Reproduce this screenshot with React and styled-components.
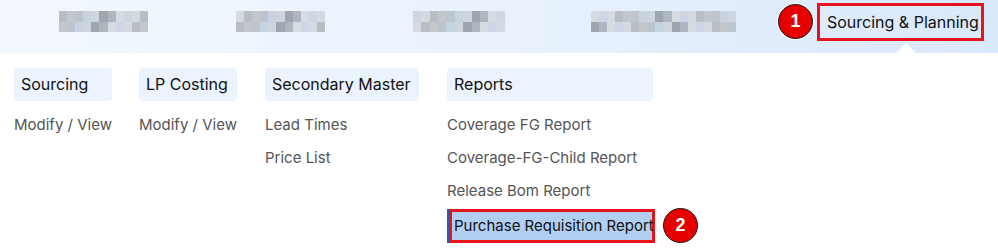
import React from "react";
import styled, { createGlobalStyle } from "styled-components";

const Global = createGlobalStyle`
  html, body { margin: 0; padding: 0; background: #fff; }
  body { font-family: Inter, "Noto Sans", sans-serif; width: 998px; height: 249px; overflow: hidden; }
`;

const TopBar = styled.div`
  height: 53px;
  display: flex;
  align-items: center;
  background: linear-gradient(90deg, #f3f8fe 0%, #e9f2fd 50%, #d9e8fb 100%);
  position: relative;
  padding-left: 59px;
  box-sizing: border-box;
`;

const BlurItem = styled.div`
  width: ${(p) => p.w}px;
  height: 21px;
  margin-right: ${(p) => p.mr}px;
  margin-top: -10px;
  display: grid;
  grid-template-columns: repeat(${(p) => p.cols}, 1fr);
  grid-template-rows: 1fr 1fr;
`;

const Cell = styled.div`
  background: ${(p) => p.c};
`;

const NavGroup = styled.div`
  display: flex;
  align-items: center;
  margin-left: auto;
  margin-right: 14px;
  margin-top: -10px;
  gap: 4px;
`;

const Badge = styled.div`
  width: 35px;
  height: 35px;
  flex: none;
  border-radius: 50%;
  background: #e60000;
  border: 1.5px solid #1a1a1a;
  box-shadow: 0 0 0 1px #fff;
  box-sizing: border-box;
  color: #fff;
  font-weight: 700;
  font-size: 18px;
  display: flex;
  align-items: center;
  justify-content: center;
  font-family: "Liberation Sans", Arial, sans-serif;
`;

const ActiveNav = styled.div`
  border: 3px solid #e8141b;
  height: 38px;
  width: 167px;
  box-sizing: border-box;
  padding: 0 0 0 7px;
  display: flex;
  align-items: center;
  font-size: 16px;
  color: #111;
  white-space: nowrap;
  position: relative;
  &::after {
    content: "";
    position: absolute;
    left: 76px;
    bottom: -15px;
    width: 0;
    height: 0;
    border-left: 10px solid transparent;
    border-right: 10px solid transparent;
    border-bottom: 10px solid #fff;
  }
`;

const Menu = styled.div`
  display: flex;
  padding: 15px 0 0 14px;
  gap: 27px;
`;

const Column = styled.div`
  width: ${(p) => p.w}px;
  margin-left: ${(p) => p.ml || 0}px;
  display: flex;
  flex-direction: column;
`;

const Heading = styled.div`
  height: 33px;
  background: #ebf3fe;
  border-radius: 4px;
  display: flex;
  align-items: center;
  padding-left: 7px;
  padding-bottom: 1px;
  box-sizing: border-box;
  font-size: 16px;
  color: #111;
  margin-bottom: 7px;
`;

const Link = styled.div`
  height: 33px;
  display: flex;
  align-items: center;
  font-size: 15px;
  color: #555;
  white-space: nowrap;
`;

const ItemRow = styled.div`
  display: flex;
  align-items: center;
  gap: 8px;
  margin-top: 1px;
`;

const Highlight = styled.div`
  width: 206px;
  height: 34px;
  flex: none;
  margin-left: 2px;
  box-sizing: border-box;
  background: #b0cff1;
  border: 3px solid #e8141b;
  box-shadow: -2px 0 0 #1d5fc4;
  display: flex;
  align-items: center;
  padding-left: 2px;
  font-size: 15px;
  color: #111;
  white-space: nowrap;
`;

const shades = ["#c3c7cc", "#cfd5dc", "#d7dce3", "#b9bec5", "#c6d3e0", "#aeb6c0", "#d4dae2", "#bcc4cd", "#9ea6b0", "#cdd6e2"];

function Blur({ w, cols, mr, seed }) {
  const cells = [];
  for (let i = 0; i < cols * 2; i++) {
    cells.push(<Cell key={i} c={shades[(i * 7 + seed * 3) % shades.length]} />);
  }
  return (
    <BlurItem w={w} cols={cols} mr={mr}>
      {cells}
    </BlurItem>
  );
}

export default function App() {
  return (
    <>
      <Global />
      <TopBar>
        <Blur w={89} cols={11} mr={88} seed={1} />
        <Blur w={89} cols={11} mr={88} seed={2} />
        <Blur w={92} cols={11} mr={86} seed={3} />
        <Blur w={145} cols={18} mr={0} seed={4} />
        <NavGroup>
          <Badge>1</Badge>
          <ActiveNav>Sourcing &amp; Planning</ActiveNav>
        </NavGroup>
      </TopBar>
      <Menu>
        <Column w={98}>
          <Heading>Sourcing</Heading>
          <Link>Modify / View</Link>
        </Column>
        <Column w={98}>
          <Heading>LP Costing</Heading>
          <Link>Modify / View</Link>
        </Column>
        <Column w={154} ml={1}>
          <Heading>Secondary Master</Heading>
          <Link>Lead Times</Link>
          <Link>Price List</Link>
        </Column>
        <Column w={206} ml={1}>
          <Heading>Reports</Heading>
          <Link>Coverage FG Report</Link>
          <Link>Coverage-FG-Child Report</Link>
          <Link>Release Bom Report</Link>
          <ItemRow>
            <Highlight>Purchase Requisition Report</Highlight>
            <Badge>2</Badge>
          </ItemRow>
        </Column>
      </Menu>
    </>
  );
}
